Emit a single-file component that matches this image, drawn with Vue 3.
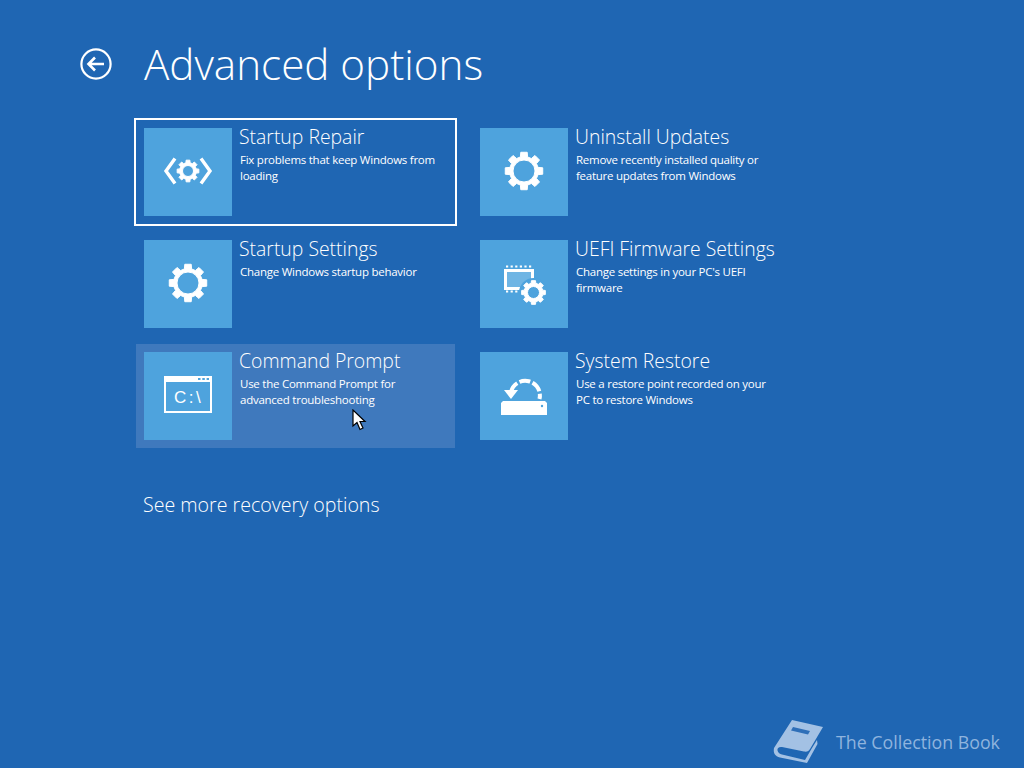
<script setup>
const options = [
  { title: "Startup Repair", desc: "Fix problems that keep Windows from\nloading", icon: "repair", selected: true },
  { title: "Uninstall Updates", desc: "Remove recently installed quality or\nfeature updates from Windows", icon: "gear" },
  { title: "Startup Settings", desc: "Change Windows startup behavior", icon: "gear" },
  { title: "UEFI Firmware Settings", desc: "Change settings in your PC's UEFI\nfirmware", icon: "firmware" },
  { title: "Command Prompt", desc: "Use the Command Prompt for\nadvanced troubleshooting", icon: "cmd", hover: true },
  { title: "System Restore", desc: "Use a restore point recorded on your\nPC to restore Windows", icon: "restore" },
];

// 8 tooth gear with a round hole, hole is cut by evenodd fill
function gearPath(cx, cy, outer, body, hole) {
  const pts = [];
  for (let i = 0; i < 8; i++) {
    const a = (i * Math.PI) / 4 - Math.PI / 2;
    pts.push([body, a - 0.25], [outer, a - 0.17], [outer, a + 0.17], [body, a + 0.25]);
  }
  const line = pts
    .map(([r, a], i) => `${i ? "L" : "M"}${(cx + r * Math.cos(a)).toFixed(2)} ${(cy + r * Math.sin(a)).toFixed(2)}`)
    .join(" ");
  return `${line} Z M${cx - hole} ${cy} a${hole} ${hole} 0 1 0 ${hole * 2} 0 a${hole} ${hole} 0 1 0 ${-hole * 2} 0 Z`;
}

const bigGear = gearPath(44, 43, 19, 14.5, 11);
const repairGear = gearPath(44, 43, 11, 8.5, 5.5);
const chipGear = gearPath(53.5, 52.5, 12, 9.5, 6);
</script>

<template>
  <div class="screen">
    <header class="head">
      <svg class="back" width="32" height="32" viewBox="0 0 32 32" fill="none" stroke="#fff" stroke-width="2.2">
        <circle cx="16" cy="16" r="14.6" />
        <path d="M24 16H9M15 9.5L8.5 16L15 22.5" stroke-width="2.6" />
      </svg>
      <h1 class="title">Advanced options</h1>
    </header>

    <div class="grid">
      <div
        v-for="opt in options"
        :key="opt.title"
        class="option"
        :class="{ selected: opt.selected, hover: opt.hover }"
      >
        <div class="tile">
          <svg width="88" height="88" viewBox="0 0 88 88">
            <path v-if="opt.icon === 'gear'" :d="bigGear" class="solid" fill-rule="evenodd" />
            <g v-else-if="opt.icon === 'repair'">
              <path :d="repairGear" class="solid" fill-rule="evenodd" />
              <path d="M31 30.500L22 43L31 55.500M57 30.500L66 43L57 55.500" fill="none" stroke="#fff" stroke-width="3.4" />
            </g>
            <g v-else-if="opt.icon === 'firmware'">
              <rect x="25.500" y="30.500" width="27" height="18" fill="#6fb5e4" stroke="#fff" stroke-width="3" />
              <path d="M26 26.500H53M26 51.500H38" fill="none" stroke="#fff" stroke-width="2.2" stroke-dasharray="2.2 2.4" />
              <circle cx="53.500" cy="52.500" r="14.500" fill="#4ea3dd" />
              <path :d="chipGear" class="solid" fill-rule="evenodd" />
            </g>
            <g v-else-if="opt.icon === 'cmd'">
              <rect x="21" y="25" width="46" height="35" fill="none" stroke="#fff" stroke-width="2" />
              <rect x="20" y="24" width="48" height="6" fill="#fff" />
              <path d="M54 27H65" stroke="#4ea3dd" stroke-width="2" stroke-dasharray="2.500 1.800" />
              <text x="30" y="51" class="prompt">C:\</text>
            </g>
            <g v-else-if="opt.icon === 'restore'">
              <path
                d="M31 40A14.500 14.500 0 0 1 59.500 47"
                fill="none"
                stroke="#fff"
                stroke-width="4"
                stroke-dasharray="11 2.500"
              />
              <path d="M24 38H38L31 47Z" fill="#fff" />
              <path d="M23 49H65L67 51V63H21V51Z" fill="#fff" />
              <circle cx="62" cy="54" r="1.2" fill="#4ea3dd" />
            </g>
          </svg>
        </div>
        <div class="copy">
          <div class="name">{{ opt.title }}</div>
          <div class="desc">{{ opt.desc }}</div>
        </div>
      </div>
    </div>

    <div class="more">See more recovery options</div>

    <svg class="pointer" width="16" height="24" viewBox="0 0 16 24">
      <path d="M1 1V17L5 13.5L8 20.5L11 19L8 12.5H13Z" fill="#fff" stroke="#000" stroke-width="1.2" />
    </svg>

    <div class="mark">
      <svg width="52" height="46" viewBox="0 0 52 46">
        <path
          d="M19 1L50 8L37 30C36 32 34 33 31 32.500L9 28C6 27.500 4 29 4.500 31.500C5 34 7 35 9 35.500L32 41L39 29L44 21L44.500 25L34 44L7 38.500C2 37.500 0 34 1 29Z"
          fill="#a3c1e4"
        />
        <path d="M20 8L37 12L35 15.500L18 11.500Z" fill="#2f6fb8" />
      </svg>
      <span>The Collection Book</span>
    </div>
  </div>
</template>

<style scoped>
.screen {
  position: relative;
  width: 1024px;
  height: 768px;
  overflow: hidden;
  background: #1f66b3;
  color: #fff;
  font-family: "Open Sans", "Noto Sans", sans-serif;
}

.head {
  display: flex;
  align-items: center;
  gap: 32px;
  box-sizing: border-box;
  height: 120px;
  padding: 8px 0 0 80px;
}

.back {
  flex: none;
}

.title {
  margin: 0;
  font-size: 42.2px;
  font-weight: 300;
  line-height: 56px;
}

.grid {
  display: grid;
  grid-template-columns: 319px 320px;
  grid-auto-rows: 104px;
  column-gap: 17px;
  row-gap: 8px;
  margin-left: 136px;
}

.option {
  display: flex;
  gap: 7px;
  padding: 8px;
}

.selected {
  outline: 2px solid #fff;
}

.hover {
  background: #3f79bd;
}

.tile {
  flex: none;
  width: 88px;
  height: 88px;
  background: #4ea3dd;
}

.tile svg {
  display: block;
}

.solid {
  fill: #fff;
  stroke: #fff;
  stroke-width: 1;
  stroke-linejoin: round;
}

.prompt {
  fill: #fff;
  font-family: "Liberation Sans", sans-serif;
  font-size: 17px;
  letter-spacing: 2.5px;
}

.name {
  font-size: 19.4px;
  font-weight: 300;
  line-height: 18px;
}

.desc {
  margin: 6px 0 0 1px;
  font-size: 11.5px;
  letter-spacing: -0.25px;
  line-height: 16px;
  white-space: pre-line;
}

.more {
  margin: 44px 0 0 143px;
  font-size: 19.6px;
  font-weight: 300;
  line-height: 26px;
}

.pointer {
  position: absolute;
  left: 352px;
  top: 409px;
}

.mark {
  position: absolute;
  left: 773px;
  top: 719px;
  display: flex;
  align-items: center;
  gap: 11px;
  color: #8fb4de;
  font-size: 17.8px;
}
</style>
